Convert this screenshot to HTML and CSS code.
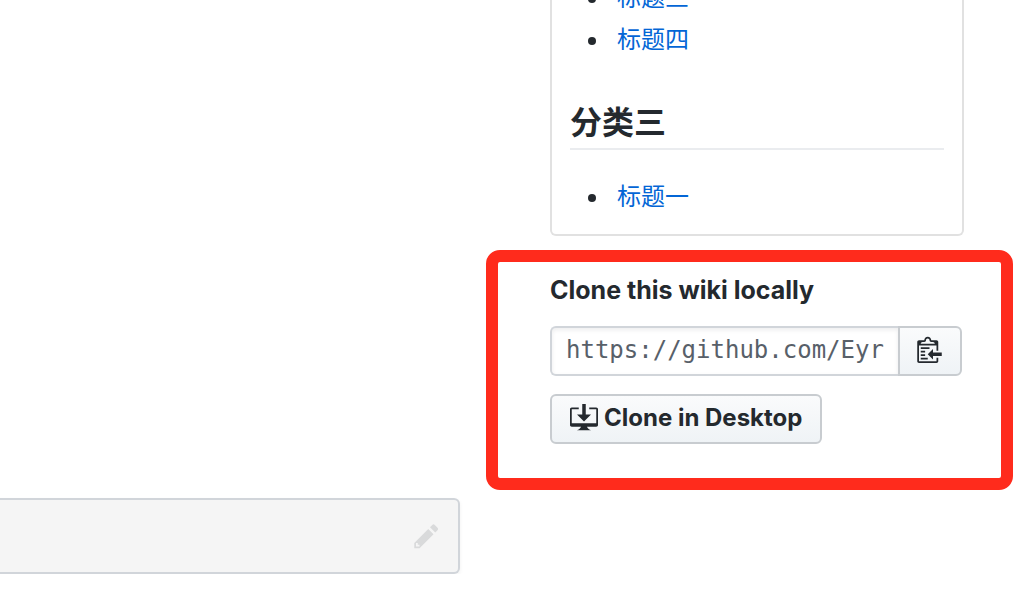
FILE: index.html
```html
<!DOCTYPE html>
<html lang="zh-CN">
<head>
<meta charset="utf-8">
<title>Wiki</title>
<link rel="stylesheet" href="styles.css">
</head>
<body>
<main class="page">
  <aside class="sidebar">
    <nav class="wiki-nav">
      <ul class="topics">
        <li><a href="#">标题三</a></li>
        <li><a href="#">标题四</a></li>
      </ul>
      <h2 class="category">分类三</h2>
      <ul class="topics">
        <li><a href="#">标题一</a></li>
      </ul>
    </nav>
    <section class="clone">
      <label class="clone-title" for="clone-url">Clone this wiki locally</label>
      <div class="url-group">
        <input class="url" id="clone-url" type="text" value="https://github.com/Eyr" readonly>
        <button class="btn copy" type="button" aria-label="Copy">
          <svg class="icon-narrow" viewBox="0 0 14 16" aria-hidden="true"><path d="M2 13h4v1H2v-1zm5-6H2v1h5V7zm2 3V8l-3 3 3 3v-2h5v-2H9zM4.5 9H2v1h2.500V9zM2 12h2.500v-1H2v1zm9 1h1v2c-.02.28-.11.52-.3.7-.19.18-.42.28-.7.3H1c-.55 0-1-.45-1-1V4c0-.55.45-1 1-1h3c0-1.110.89-2 2-2 1.110 0 2 .89 2 2h3c.55 0 1 .45 1 1v5h-1V6H1v9h10v-2zM2 5h8c0-.55-.45-1-1-1H8c-.55 0-1-.45-1-1s-.45-1-1-1-1 .45-1 1-.45 1-1 1H3c-.55 0-1 .45-1 1z"/></svg>
        </button>
      </div>
      <button class="btn desktop" type="button">
        <svg class="icon" viewBox="0 0 16 16" aria-hidden="true"><path d="M4 6h3V0h2v6h3l-4 4-4-4zm11-4h-4v1h4v8H1V3h4V2H1c-.55 0-1 .45-1 1v9c0 .55.45 1 1 1h5.340c-.25.61-.86 1.390-2.340 2h8c-1.480-.61-2.090-1.390-2.340-2H15c.55 0 1-.45 1-1V3c0-.55-.45-1-1-1z"/></svg>
        <span>Clone in Desktop</span>
      </button>
    </section>
  </aside>
  <footer class="wiki-footer">
    <a class="edit" href="#" aria-label="Edit">
      <svg class="icon-narrow" viewBox="0 0 14 16" aria-hidden="true"><path d="M0 12v3h3l8-8-3-3-8 8zm3 2H1v-2h1v1h1v1zm10.300-9.300L12 6 9 3l1.300-1.300a.996.996 0 0 1 1.410 0l1.590 1.590c.39.39.39 1.020 0 1.410z"/></svg>
    </a>
  </footer>
</main>
</body>
</html>
```
FILE: styles.css
```css
* {
  box-sizing: border-box;
}

body {
  margin: 0;
  overflow: hidden;
  background: #fff;
  color: #24292e;
  font-family: Inter, "Noto Sans CJK SC", sans-serif;
  font-size: 24px;
  line-height: 36px;
}

.page {
  display: grid;
  grid-template-columns: minmax(0, 1fr) 414px;
  column-gap: 90px;
  padding-right: 60px;
}

.sidebar {
  grid-column: 2;
  margin-top: -20px;
}

.wiki-nav {
  padding: 0 18px 19px;
  border: 2px solid #e1e1e1;
  border-top: 0;
  border-radius: 0 0 6px 6px;
}

.topics {
  margin: 0;
  padding-left: 40px;
}

.topics li {
  padding-left: 7px;
}

.topics li + li {
  margin-top: 6px;
}

.topics a {
  color: #0366d6;
  text-decoration: none;
}

.category {
  margin: 45px 0 29px;
  padding-bottom: 5px;
  border-bottom: 2px solid #eaecef;
  font-size: 32px;
  line-height: 40px;
}

.clone {
  position: relative;
  margin-top: 36px;
  padding-right: 2px;
}

.clone::after {
  content: "";
  position: absolute;
  inset: -22px -49px -46px -64px;
  border: 12px solid #ff2b1c;
  border-radius: 14px;
  pointer-events: none;
}

.clone-title {
  display: block;
  font-size: 25px;
  font-weight: 700;
}

.url-group {
  display: flex;
  margin: 18px 0;
}

.url {
  flex: 1;
  min-width: 0;
  height: 50px;
  padding: 0 14px 2px;
  border: 2px solid #d1d5da;
  border-right: 0;
  border-radius: 6px 0 0 6px;
  box-shadow: inset 0 2px 4px rgba(27, 31, 35, 0.08);
  background: #fff;
  color: #586069;
  font-family: "DejaVu Sans Mono", monospace;
  font-size: 24px;
}

.btn {
  display: flex;
  align-items: center;
  height: 50px;
  border: 2px solid #c8ccd0;
  border-radius: 6px;
  background: linear-gradient(#fafbfc, #eff3f6);
  color: #24292e;
  font-family: inherit;
  font-size: 24px;
  font-weight: 700;
}

.copy {
  justify-content: center;
  width: 64px;
  padding: 0 2px 4px 0;
  border-radius: 0 6px 6px 0;
}

.desktop {
  gap: 6px;
  padding: 0 18px 3px;
}

.icon,
.icon-narrow {
  display: block;
  height: 28px;
  fill: currentColor;
}

.icon {
  width: 28px;
}

.icon-narrow {
  width: 25px;
}

.wiki-footer {
  grid-column: 1;
  display: flex;
  align-items: center;
  justify-content: flex-end;
  height: 76px;
  margin-top: 54px;
  padding-right: 19px;
  border: 2px solid #d1d5da;
  border-left: 0;
  border-radius: 0 6px 6px 0;
  box-shadow: 0 2px 4px rgba(27, 31, 35, 0.06);
  background: #f5f5f5;
}

.edit {
  color: #d9dadb;
}
```
